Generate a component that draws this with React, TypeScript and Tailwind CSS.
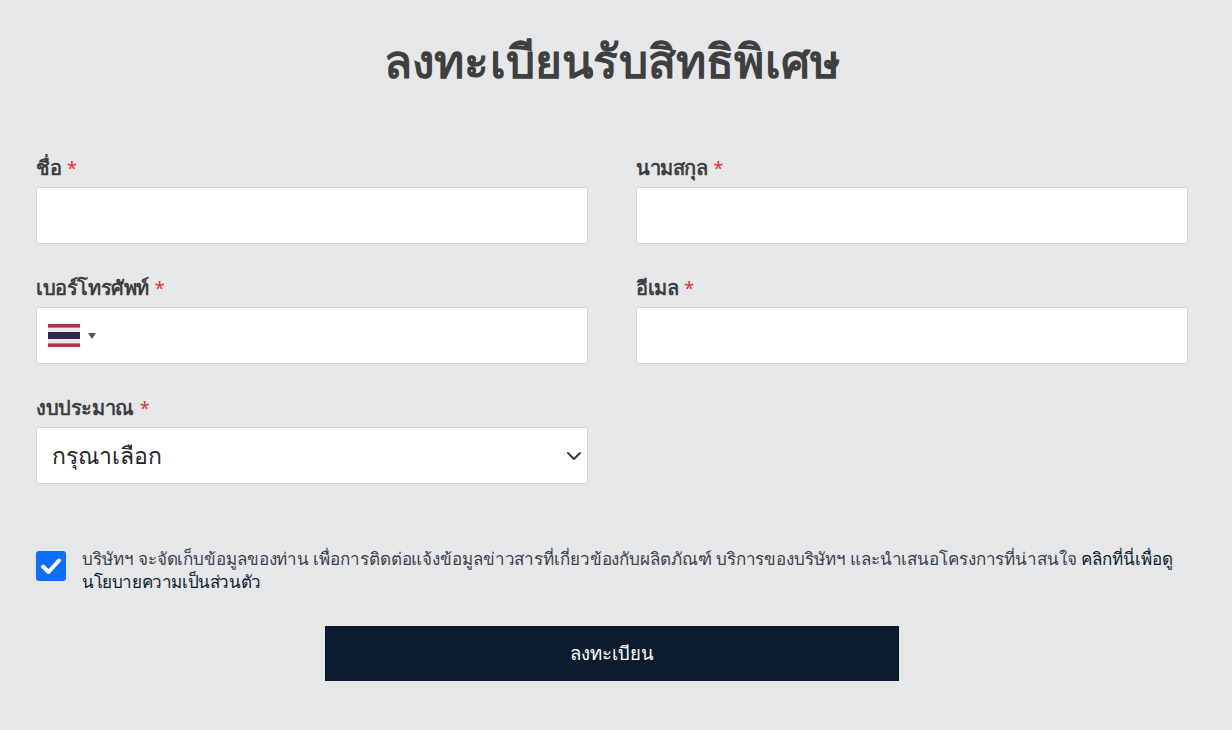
import React from 'react';

const Label: React.FC<{ text: string }> = ({ text }) => (
  <label className="block h-[28px] text-[20px] leading-[18px] font-bold text-[#3f3f3f] tracking-[-0.4px]">
    {text} <span className="ml-[1px] font-normal text-[18px] text-[#ee2b2b]">*</span>
  </label>
);

const ThaiFlag = () => (
  <svg width="32" height="23" viewBox="0 0 32 23" className="block">
    <rect width="32" height="23" fill="#efe9ec" />
    <rect y="0" width="32" height="3.6" fill="#b4314f" />
    <rect y="19.4" width="32" height="3.6" fill="#b4314f" />
    <rect y="8" width="32" height="7" fill="#2d2a4e" />
  </svg>
);

const inputClass =
  'block w-full h-[57px] bg-white border border-[#ced4da] rounded-[3px] px-[15px] outline-none';

const App: React.FC = () => {
  return (
    <div className="w-full h-[730px] overflow-hidden bg-[#e5e7e9] pl-[36px] pr-[44px] font-['Noto_Sans','Liberation_Sans',sans-serif]">
      <h1 className="pt-[30px] h-[159px] text-center text-[46px] leading-[60px] font-extrabold tracking-[0.2px] text-[#3f3f3f]">
        ลงทะเบียนรับสิทธิพิเศษ
      </h1>

      <div className="grid grid-cols-2 gap-x-[48px] gap-y-[35px]">
        <div>
          <Label text="ชื่อ" />
          <input className={inputClass} />
        </div>
        <div>
          <Label text="นามสกุล" />
          <input className={inputClass} />
        </div>
        <div>
          <Label text="เบอร์โทรศัพท์" />
          <div className={`${inputClass} flex items-center gap-[8px] !px-[11px]`}>
            <ThaiFlag />
            <span className="w-0 h-0 border-x-[4px] border-x-transparent border-t-[6px] border-t-[#555555]"></span>
          </div>
        </div>
        <div>
          <Label text="อีเมล" />
          <input className={inputClass} />
        </div>
        <div>
          <Label text="งบประมาณ" />
          <div className={`${inputClass} flex items-center justify-between !pr-[5px] text-[23px] text-[#212529]`}>
            <span>กรุณาเลือก</span>
            <svg width="16" height="16" viewBox="0 0 16 16" fill="none">
              <path d="M2 5l6 6 6-6" stroke="#343a40" strokeWidth="2" strokeLinecap="round" strokeLinejoin="round" />
            </svg>
          </div>
        </div>
      </div>

      <div className="mt-[60px] flex items-start gap-[16px]">
        <div className="mt-[7px] w-[30px] h-[30px] shrink-0 rounded-[3px] bg-[#0d6efd] flex items-center justify-center">
          <svg width="24" height="24" viewBox="0 0 24 24" fill="none">
            <path d="M4 12.5l5.5 5.5L20 6.5" stroke="#ffffff" strokeWidth="4" strokeLinecap="round" strokeLinejoin="round" />
          </svg>
        </div>
        <p className="text-[17px] leading-[23px] text-[#3a4150] pt-[3px]">
          <span className="tracking-[-0.1px]">บริษัทฯ จะจัดเก็บข้อมูลของท่าน เพื่อการติดต่อแจ้งข้อมูลข่าวสารที่เกี่ยวข้องกับผลิตภัณฑ์ บริการของบริษัทฯ และนำเสนอโครงการที่น่าสนใจ</span>{' '}
          <span className="text-[#0b1c30]">คลิกที่นี่เพื่อดู<br /><span className="tracking-[-0.4px]">นโยบายความเป็นส่วนตัว</span></span>
        </p>
      </div>

      <div className="mt-[33px] flex justify-center">
        <button className="w-[574px] h-[55px] pb-[2px] bg-[#0b1c30] text-white text-[18.5px] font-medium">
          ลงทะเบียน
        </button>
      </div>
    </div>
  );
};

export default App;
